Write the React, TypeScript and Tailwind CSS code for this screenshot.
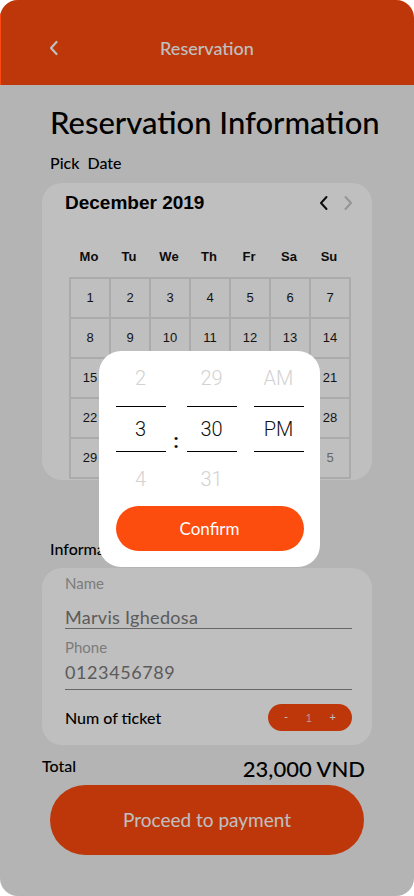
import React from "react";

const geo = { fontFamily: "Lato, 'Open Sans', sans-serif" };
const sf = { fontFamily: "'Liberation Sans', Arial, sans-serif" };
const rob = { fontFamily: "Roboto, sans-serif" };

const days = ["Mo", "Tu", "We", "Th", "Fr", "Sa", "Su"];
const rows = [
  [1, 2, 3, 4, 5, 6, 7],
  [8, 9, 10, 11, 12, 13, 14],
  [15, 16, 17, 18, 19, 20, 21],
  [22, 23, 24, 25, 26, 27, 28],
  [29, 30, 31, 1, 2, 3, 5],
];

export default function App() {
  return (
    <div className="relative w-[414px] h-[896px] bg-white overflow-hidden">
      <div className="relative w-full h-full rounded-[18px] overflow-hidden bg-[#F0F0F0] flex flex-col" style={geo}>
        {/* header */}
        <div className="h-[85px] shrink-0 bg-[#FC4A0E] flex items-center justify-center relative">
          <svg className="absolute left-[48px] top-[40px]" width="12" height="16" viewBox="0 0 12 16" fill="none">
            <path d="M8.5 2 L3 8 L8.5 14" stroke="white" strokeWidth="2.2" strokeLinecap="round" strokeLinejoin="round" />
          </svg>
          <span className="text-white text-[18px] font-medium mt-[12px]">Reservation</span>
        </div>

        <div className="flex flex-col px-[42px]">
          <h1 className="text-black text-[31px] leading-[36px] font-medium mt-[19px] ml-[8px] whitespace-nowrap">Reservation Information</h1>
          <div className="text-black text-[16px] leading-[20px] font-medium mt-[13px] ml-[8px]">Pick&nbsp; Date</div>

          {/* calendar */}
          <div className="mt-[10px] h-[297px] bg-white rounded-[20px] pl-[27px] pt-[8px]" style={sf}>
            <div className="flex items-center justify-between h-[22px] mt-[1px] pr-[18px]">
              <span className="text-[19px] font-bold text-black -ml-[4px]">December 2019</span>
              <div className="flex items-center gap-[12px]">
                <svg width="12" height="16" viewBox="0 0 12 16" fill="none">
                  <path d="M8.5 2 L3 8 L8.5 14" stroke="#111" strokeWidth="2" strokeLinecap="round" strokeLinejoin="round" />
                </svg>
                <svg width="12" height="16" viewBox="0 0 12 16" fill="none">
                  <path d="M3.5 2 L9 8 L3.5 14" stroke="#C7C7C7" strokeWidth="2" strokeLinecap="round" strokeLinejoin="round" />
                </svg>
              </div>
            </div>
            <div className="grid grid-cols-[repeat(7,40px)] mt-[33px] h-[20px] items-center">
              {days.map((d) => (
                <span key={d} className="text-center text-[13px] font-bold text-[#111]">{d}</span>
              ))}
            </div>
            <div className="mt-[10px] w-[282px] border-l-2 border-t-2 border-[#E4E4E4] grid grid-cols-7">
              {rows.flat().map((n, i) => (
                <div
                  key={i}
                  className={`h-[40px] border-r-2 border-b-2 border-[#E4E4E4] flex items-center justify-center text-[13px] ${i >= 31 ? "text-[#8A8A8A]" : "text-[#1A1A1A]"}`}
                >
                  {n}
                </div>
              ))}
            </div>
          </div>

          <div className="text-black text-[16px] leading-[20px] font-medium mt-[59px] ml-[8px]">Information</div>

          {/* info card */}
          <div className="mt-[9px] h-[177px] bg-white rounded-[20px] pl-[23px] pr-[20px] pt-[5px] flex flex-col">
            <div className="text-[15px] leading-[20px] text-[#A6A6A6]">Name</div>
            <div className="mt-[15px] h-[21px] border-b-[1.5px] border-[#8A8A8A] text-[18px] leading-[18px] text-[#7A7A7A] tracking-[0.3px]">Marvis Ighedosa</div>
            <div className="mt-[8px] text-[15px] leading-[20px] text-[#A6A6A6]">Phone</div>
            <div className="mt-[4px] h-[29px] border-b-[1.5px] border-[#8A8A8A] text-[18px] leading-[22px] text-[#7A7A7A] tracking-[0.6px]">0123456789</div>
            <div className="mt-[14px] flex items-center justify-between h-[27px]">
              <span className="text-[16px] font-medium text-black">Num of ticket</span>
              <div className="w-[84px] h-[27px] rounded-full bg-[#FC4A0E] flex items-center justify-between px-[16px] text-white text-[11px]">
                <span>-</span>
                <span className="text-[12px] font-light">1</span>
                <span>+</span>
              </div>
            </div>
          </div>

          <div className="mt-[8px] flex items-center justify-between h-[30px] pr-[7px]">
            <span className="text-[16px] font-medium text-black -mt-[4px]">Total</span>
            <span className="text-[22px] font-medium text-black">23,000 VND</span>
          </div>

          <button className="mt-[2px] ml-[8px] w-[314px] h-[70px] rounded-[35px] bg-[#FC4A0E] text-white text-[19px] flex items-center justify-center">
            Proceed to payment
          </button>
        </div>

        {/* overlay */}
        <div className="absolute inset-0 bg-black/25" />
        <div className="absolute left-0 top-[10px] w-px h-[75px] bg-[#FC4A0E]" />
      </div>

      {/* time picker modal */}
      <div className="absolute left-[99px] top-[351px] w-[221px] h-[216px] bg-white rounded-[22px] flex flex-col items-center" style={rob}>
        <div className="flex items-start mt-[13px] w-[188px]">
          <div className="w-[50px] flex flex-col items-center">
            <span className="h-[28px] flex items-center text-[20px] font-light text-[#D2D2D2]">2</span>
            <div className="w-[50px] mt-[14px] border-t border-black" />
            <span className="h-[44px] flex items-center text-[20px] font-light text-[#111]">3</span>
            <div className="w-[50px] border-t border-black" />
            <span className="mt-[13px] h-[28px] flex items-center text-[20px] font-light text-[#D2D2D2]">4</span>
          </div>
          <div className="w-[21px] flex justify-center mt-[55px] h-[44px] items-center text-[20px] font-bold text-[#111]">:</div>
          <div className="w-[50px] flex flex-col items-center">
            <span className="h-[28px] flex items-center text-[20px] font-light text-[#D2D2D2]">29</span>
            <div className="w-[50px] mt-[14px] border-t border-black" />
            <span className="h-[44px] flex items-center text-[20px] font-light text-[#111]">30</span>
            <div className="w-[50px] border-t border-black" />
            <span className="mt-[13px] h-[28px] flex items-center text-[20px] font-light text-[#D2D2D2]">31</span>
          </div>
          <div className="w-[17px]" />
          <div className="w-[50px] flex flex-col items-center">
            <span className="h-[28px] flex items-center text-[20px] font-light text-[#D2D2D2]">AM</span>
            <div className="w-[50px] mt-[14px] border-t border-black" />
            <span className="h-[44px] flex items-center text-[20px] font-light text-[#111]">PM</span>
            <div className="w-[50px] border-t border-black" />
          </div>
        </div>
        <button className="mt-[13px] w-[188px] h-[45px] rounded-full bg-[#FC4C0E] text-white text-[17px]" style={geo}>
          Confirm
        </button>
      </div>
    </div>
  );
}
